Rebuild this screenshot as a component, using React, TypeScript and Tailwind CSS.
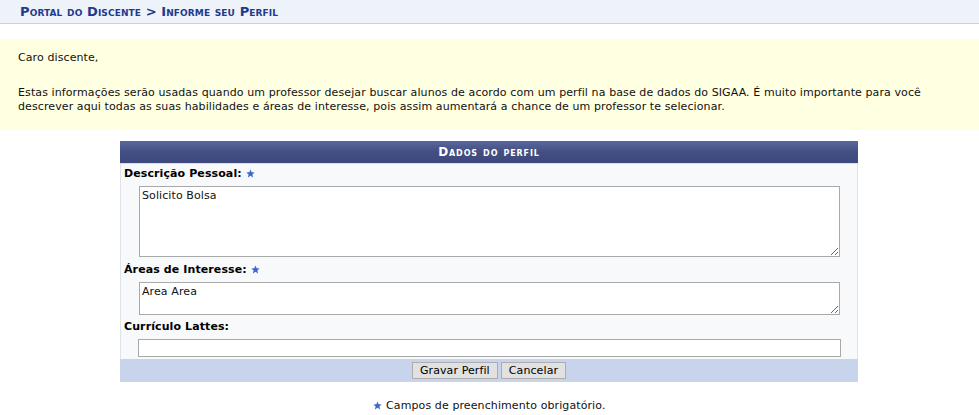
import type { ReactNode } from 'react'

function Star() {
  return (
    <svg width="9" height="9" viewBox="0 0 10 10" className="inline-block align-[-1px]">
      <polygon
        points="5,0.5 6.3,3.6 9.6,3.8 7.1,6 7.9,9.4 5,7.6 2.1,9.4 2.9,6 0.4,3.8 3.7,3.6"
        fill="#3d68c9"
      />
    </svg>
  )
}

function Label({ children, required, className }: { children: ReactNode; required?: boolean; className: string }) {
  return (
    <div className={`pl-[3px] leading-[14px] font-bold text-black ${className}`}>
      {children}
      {required && (
        <>
          {' '}
          <Star />
        </>
      )}
    </div>
  )
}

const field =
  "block border border-[#a9a9a9] bg-white px-[2px] text-[11px] leading-[14px] font-['DejaVu_Sans','Verdana',sans-serif] tracking-[0.1px] text-[#111] outline-none"

const btn =
  "h-[17px] px-[7px] bg-[#e1e1e1] border border-[#adadad] text-[11px] leading-[15px] tracking-[0.1px] text-black font-['DejaVu_Sans','Verdana',sans-serif]"

export default function App() {
  return (
    <div className="min-h-[415px] bg-white font-['DejaVu_Sans','Verdana',sans-serif] text-[11px] tracking-[0.1px] text-[#111]">
      {/* breadcrumb */}
      <div className="h-[24px] bg-[#eef2f9] border-b border-[#c9d1e2] pl-[20px] flex items-center">
        <h2 className="text-[13px] font-bold [font-variant:small-caps] text-[#1f3a8c] tracking-[0.1px]">
          Portal do Discente &gt; Informe seu Perfil
        </h2>
      </div>

      {/* notice */}
      <div className="mt-[15px] bg-[#ffffe1] px-[18px] pt-[12px] pb-[16px] leading-[14px]">
        <p>Caro discente,</p>
        <p className="mt-[21px]">
          Estas informações serão usadas quando um professor desejar buscar alunos de acordo com um perfil na base de
          dados do SIGAA. É muito importante para você
          <br />
          descrever aqui todas as suas habilidades e áreas de interesse, pois assim aumentará a chance de um professor te
          selecionar.
        </p>
      </div>

      {/* form */}
      <div className="ml-[120px] mt-[11px] w-[738px]">
        <div className="h-[23px] bg-linear-to-b from-[#5a679c] via-[#434f83] to-[#3d497c] flex items-center justify-center border-b border-[#d8deea]">
          <span className="font-bold text-white [font-variant:small-caps] text-[12px] tracking-[0.9px]">
            Dados do perfil
          </span>
        </div>
        <div className="bg-[#f8f9fb] border-x border-[#dfe3eb]">
          <Label required className="pt-[3px]">
            Descrição Pessoal:
          </Label>
          <div className="pl-[18px] pt-[5px]">
            <textarea defaultValue="Solicito Bolsa" className={`${field} w-[701px] h-[71px] py-[2px]`} />
          </div>
          <Label required className="pt-[6px]">
            Áreas de Interesse:
          </Label>
          <div className="pl-[18px] pt-[5px]">
            <textarea defaultValue="Area Area" className={`${field} w-[701px] h-[33px] py-[2px]`} />
          </div>
          <Label className="pt-[5px]">Currículo Lattes:</Label>
          <div className="pl-[17px] pt-[5px] pb-[2px]">
            <input type="text" className={`${field} w-[703px] h-[18px]`} />
          </div>
        </div>
        <div className="h-[23px] bg-[#c8d3ec] flex items-center justify-center gap-[3px]">
          <button className={btn}>Gravar Perfil</button>
          <button className={btn}>Cancelar</button>
        </div>
      </div>

      <div className="mt-[17px] text-center leading-[14px]">
        <Star /> Campos de preenchimento obrigatório.
      </div>
    </div>
  )
}
